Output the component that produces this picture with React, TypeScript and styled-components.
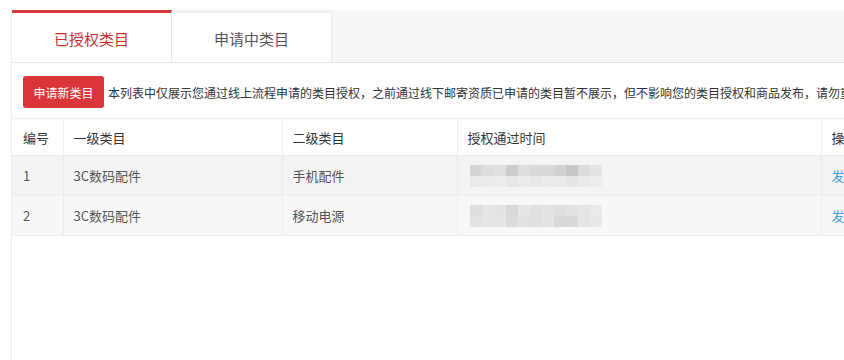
import React from "react";
import styled, { createGlobalStyle } from "styled-components";

const Global = createGlobalStyle`
  html, body { margin: 0; padding: 0; background: #fff; }
  body { font-family: "Noto Sans CJK SC", "Noto Sans", "Liberation Sans", sans-serif; color: #333; }
`;

const Page = styled.div`
  width: 844px;
  height: 360px;
  overflow: hidden;
  padding: 10px 0 0 11px;
  box-sizing: border-box;
`;

const Panel = styled.div`
  width: 900px;
  height: 100%;
  border-left: 1px solid #ececec;
  display: flex;
  flex-direction: column;
`;

const TabBar = styled.div`
  display: flex;
  height: 53px;
  background: #f7f7f7;
  border-bottom: 1px solid #e6e6e6;
  box-sizing: border-box;
`;

const Tab = styled.div<{ $active?: boolean }>`
  width: 160px;
  box-sizing: border-box;
  background: #fff;
  border-top: 3px solid ${(p) => (p.$active ? "#d23a3a" : "#f2f2f2")};
  border-right: 1px solid #e8e8e8;
  display: flex;
  align-items: center;
  justify-content: center;
  font-size: 15px;
  padding-top: 2px;
  color: ${(p) => (p.$active ? "#c9302c" : "#555")};
`;

const Toolbar = styled.div`
  display: flex;
  align-items: center;
  gap: 4px;
  padding: 13px 0 10px 11px;
  white-space: nowrap;
`;

const RedButton = styled.button`
  width: 81px;
  height: 32px;
  border: none;
  border-radius: 3px;
  background: #d9353a;
  color: #fff;
  font-family: inherit;
  font-size: 12px;
  padding: 0;
  cursor: pointer;
`;

const Notice = styled.span`
  font-size: 12px;
  color: #333;
`;

const Table = styled.table`
  border-collapse: collapse;
  table-layout: fixed;
  width: 889px;
  font-size: 13px;
`;

const HeadCell = styled.th<{ $first?: boolean }>`
  height: 36px;
  padding: 0 0 0 ${(p) => (p.$first ? "11px" : "10px")};
  text-align: left;
  font-weight: normal;
  color: #333;
  border-top: 1px solid #eeeeee;
  border-right: 1px solid #eeeeee;
  border-bottom: 1px solid #ececec;
  white-space: nowrap;
`;

const Row = styled.tr<{ $shade: string }>`
  background: ${(p) => p.$shade};
`;

const Cell = styled.td<{ $first?: boolean }>`
  height: 39px;
  padding: 0 0 0 ${(p) => (p.$first ? "11px" : "10px")};
  color: #555;
  border-right: 1px solid #ececec;
  border-bottom: 1px solid #eeeeee;
  white-space: nowrap;
`;

const Link = styled.a`
  color: #4a9ad6;
  text-decoration: none;
`;

const Mosaic = styled.div`
  display: grid;
  grid-template-columns: repeat(11, 12px);
  grid-auto-rows: 11px;
  width: 132px;
  margin-left: 2px;
`;

const Pixel = styled.span<{ $c: string }>`
  background: ${(p) => p.$c};
`;

const mosaicA = [
  "#d6d6d6", "#dcdcdc", "#e0e0e0", "#cdcdcd", "#dedede", "#d9d9d9", "#d9d9d9", "#d2d2d2", "#c8c8c8", "#dcdcdc", "#e4e4e4",
  "#eaeaea", "#ebebeb", "#ececec", "#e6e6e6", "#ebebeb", "#e8e8e8", "#ebebeb", "#e9e9e9", "#e6e6e6", "#eaeaea", "#ededed",
];
const mosaicB = [
  "#dedede", "#e6e6e6", "#e4e4e4", "#d8d8d8", "#e6e6e6", "#e0e0e0", "#e3e3e3", "#dfdfdf", "#e2e2e2", "#e6e6e6", "#eaeaea",
  "#e3e3e3", "#e7e7e7", "#e6e6e6", "#dbdbdb", "#e2e2e2", "#e0e0e0", "#e4e4e4", "#d9d9d9", "#dadada", "#e6e6e6", "#e9e9e9",
];

const rows = [
  { id: 1, l1: "3C数码配件", l2: "手机配件", shade: "#f4f4f4", mosaic: mosaicA },
  { id: 2, l1: "3C数码配件", l2: "移动电源", shade: "#f8f8f8", mosaic: mosaicB },
];

export default function App() {
  return (
    <>
      <Global />
      <Page>
        <Panel>
          <TabBar>
            <Tab $active>已授权类目</Tab>
            <Tab>申请中类目</Tab>
          </TabBar>
          <Toolbar>
            <RedButton>申请新类目</RedButton>
            <Notice>
              本列表中仅展示您通过线上流程申请的类目授权，之前通过线下邮寄资质已申请的类目暂不展示，但不影响您的类目授权和商品发布，请勿重复申请
            </Notice>
          </Toolbar>
          <Table>
            <colgroup>
              <col style={{ width: 51 }} />
              <col style={{ width: 219 }} />
              <col style={{ width: 175 }} />
              <col style={{ width: 364 }} />
              <col style={{ width: 80 }} />
            </colgroup>
            <thead>
              <tr>
                <HeadCell $first>编号</HeadCell>
                <HeadCell>一级类目</HeadCell>
                <HeadCell>二级类目</HeadCell>
                <HeadCell>授权通过时间</HeadCell>
                <HeadCell>操作</HeadCell>
              </tr>
            </thead>
            <tbody>
              {rows.map((r) => (
                <Row key={r.id} $shade={r.shade}>
                  <Cell $first>{r.id}</Cell>
                  <Cell>{r.l1}</Cell>
                  <Cell>{r.l2}</Cell>
                  <Cell>
                    <Mosaic>
                      {r.mosaic.map((c, i) => (
                        <Pixel key={i} $c={c} />
                      ))}
                    </Mosaic>
                  </Cell>
                  <Cell>
                    <Link href="#">发布商品</Link>
                  </Cell>
                </Row>
              ))}
            </tbody>
          </Table>
        </Panel>
      </Page>
    </>
  );
}
